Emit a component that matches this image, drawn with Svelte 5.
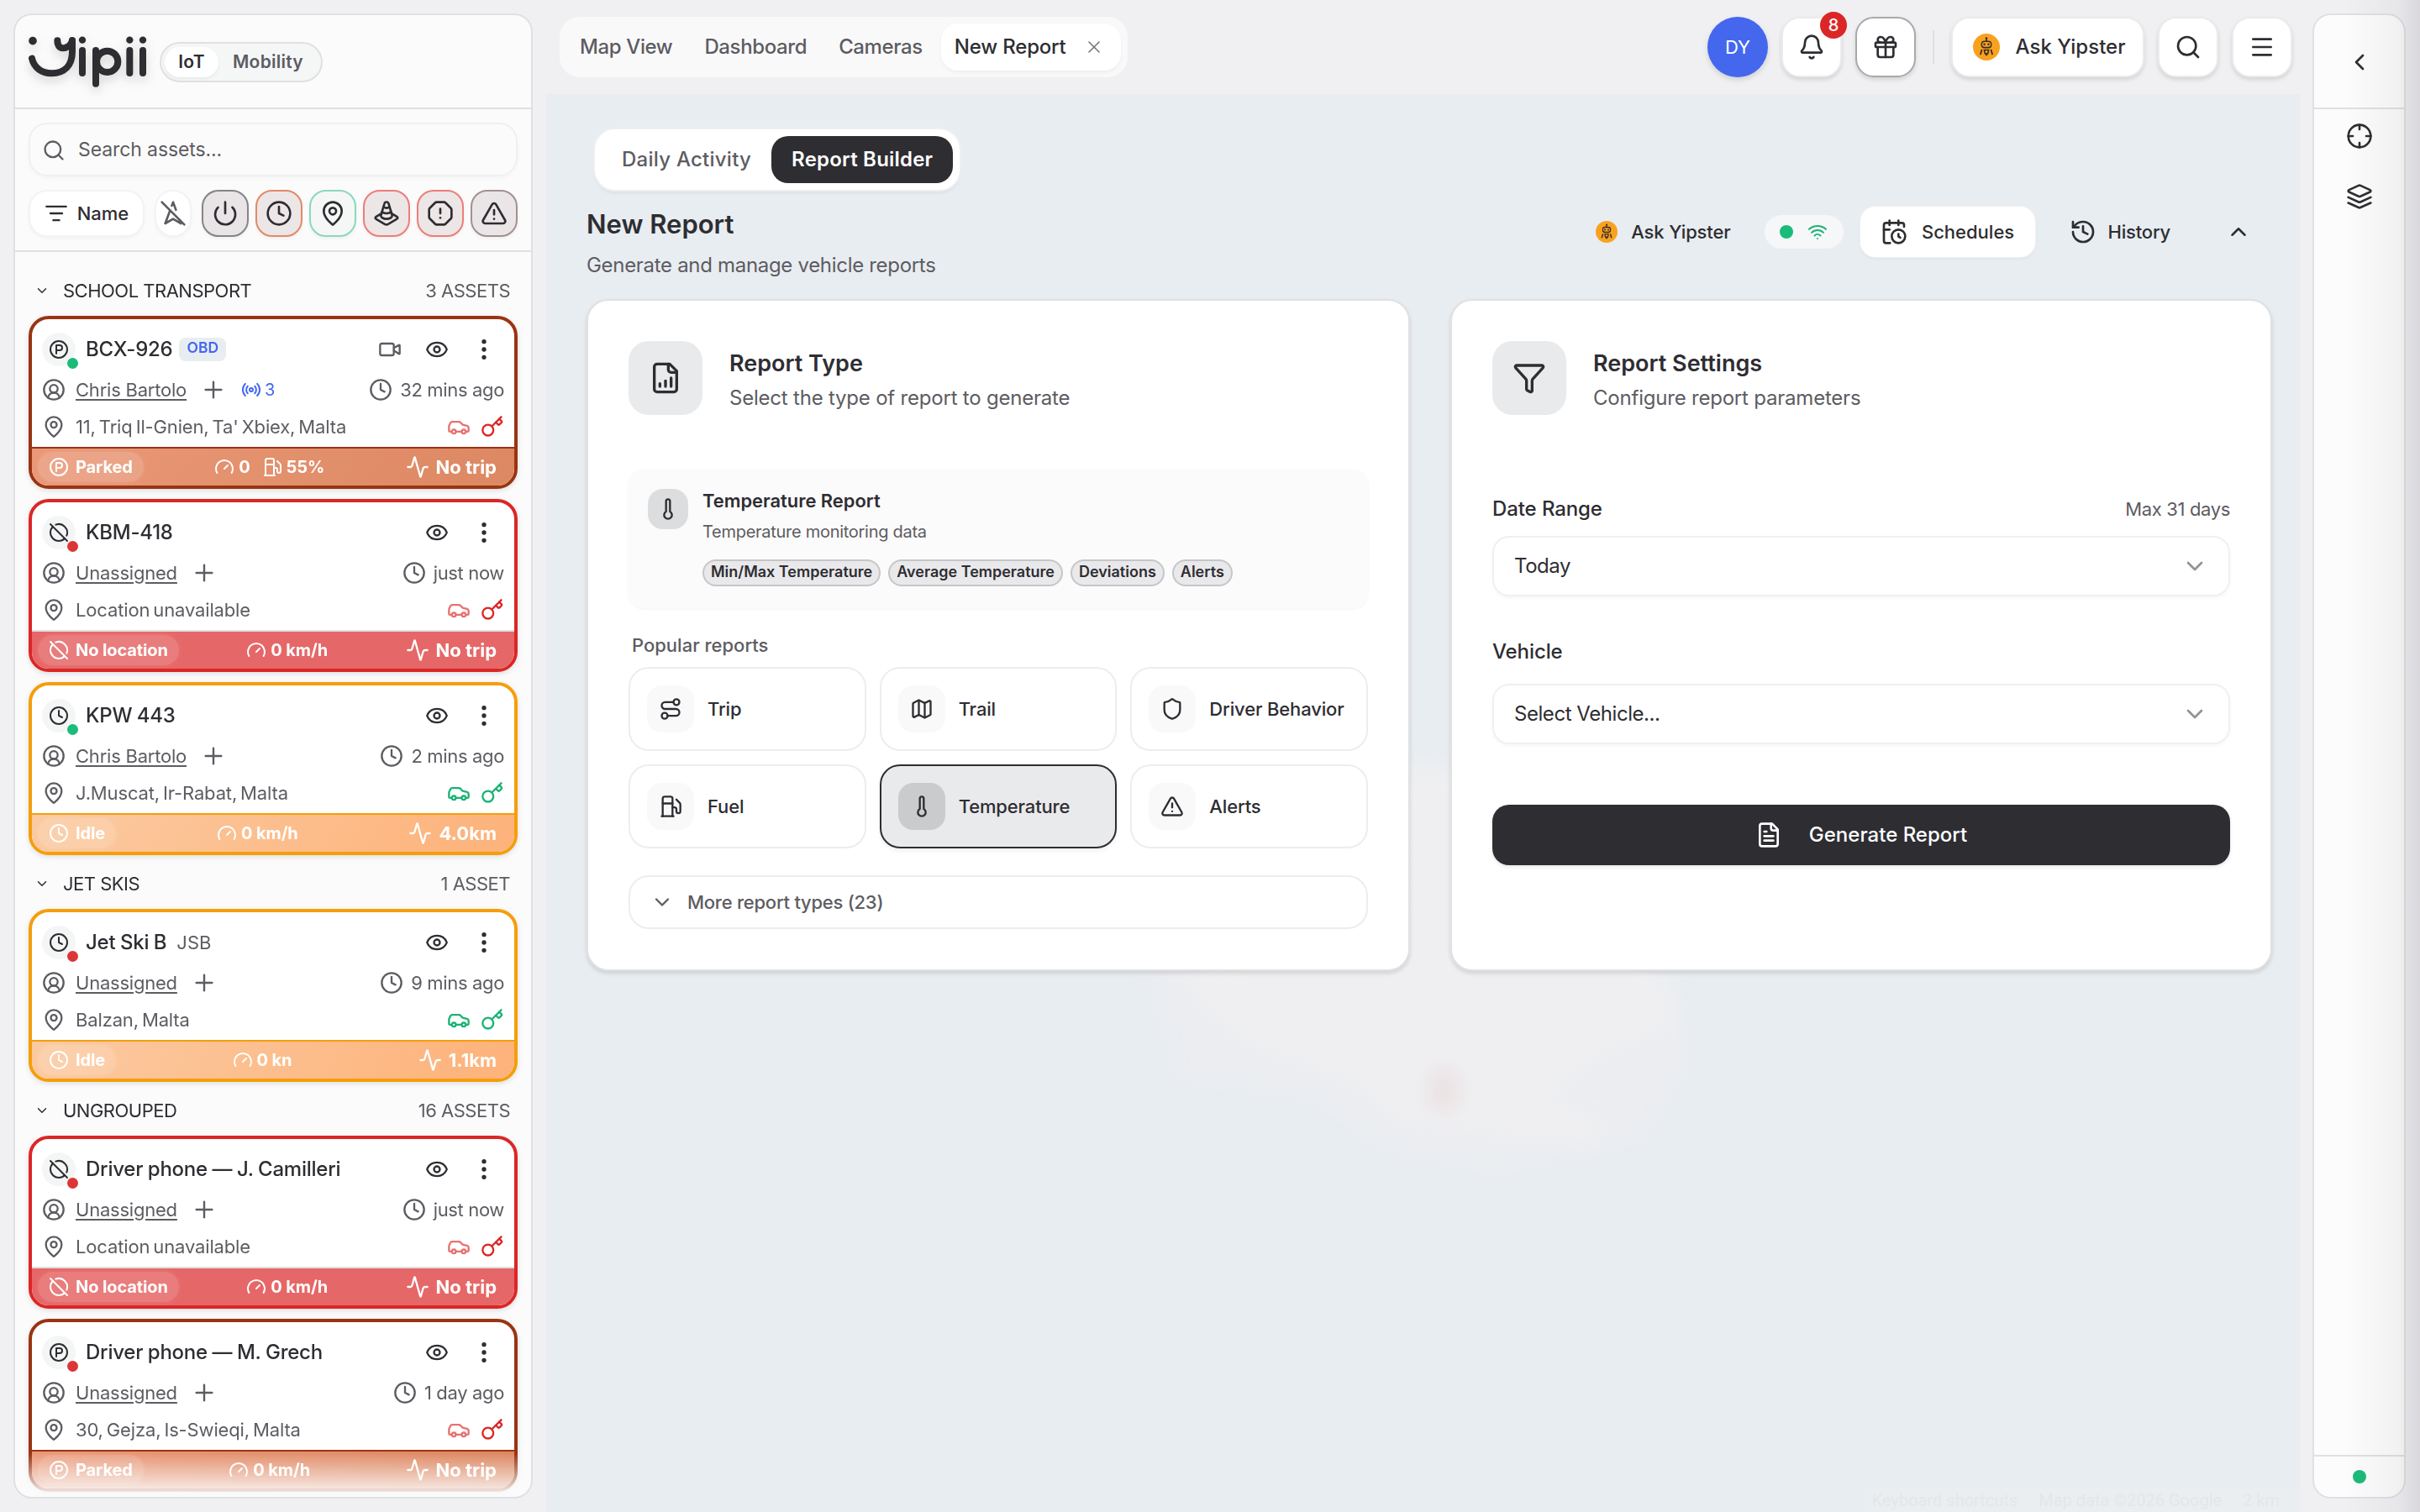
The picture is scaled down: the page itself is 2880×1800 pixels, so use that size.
<script lang="ts">
  const ring = 'M22 12a10 10 0 1 1-20 0 10 10 0 0 1 20 0';

  const icons: Record<string, string[]> = {
    search: ['M19 11a8 8 0 1 1-16 0 8 8 0 0 1 16 0', 'm21 21-4.3-4.3'],
    sort: ['M2 5h20', 'M6 12h12', 'M9 19h6'],
    navOff: ['M9.31 9.31 5 21l7-4 7 4-1.17-3.17', 'M14.53 8.88 12 2l-1.17 3.17', 'm2 2 20 20'],
    power: ['M12 2v10', 'M18.4 6.6a9 9 0 1 1-12.77.04'],
    clock: [ring, 'M12 6v6l4 2'],
    pin: ['M20 10c0 4.993-5.539 10.193-7.399 11.799a1 1 0 0 1-1.202 0C9.539 20.193 4 14.993 4 10a8 8 0 0 1 16 0', 'M15 10a3 3 0 1 1-6 0 3 3 0 0 1 6 0'],
    cone: ['M9.3 6.2a4.55 4.55 0 0 0 5.4 0', 'M7.9 10.7c.9.8 2.4 1.3 4.1 1.3s3.2-.5 4.1-1.3', 'M13.9 3.5a1.93 1.93 0 0 0-3.8-.1l-3 10c-.1.2-.1.4-.1.6 0 1.7 2.2 3 5 3s5-1.3 5-3c0-.2 0-.4-.1-.5Z', 'm7.5 12.2-4.7 2.7c-.5.3-.8.7-.8 1.1s.3.8.8 1.1l7.6 4.5c.9.5 2.1.5 3 0l7.6-4.5c.7-.3 1-.7 1-1.1s-.3-.8-.8-1.1l-4.7-2.8'],
    octagon: ['M12 16h.01', 'M12 8v4', 'M15.312 2a2 2 0 0 1 1.414.586l4.688 4.688A2 2 0 0 1 22 8.688v6.624a2 2 0 0 1-.586 1.414l-4.688 4.688a2 2 0 0 1-1.414.586H8.688a2 2 0 0 1-1.414-.586l-4.688-4.688A2 2 0 0 1 2 15.312V8.688a2 2 0 0 1 .586-1.414l4.688-4.688A2 2 0 0 1 8.688 2z'],
    alert: ['m21.73 18-8-14a2 2 0 0 0-3.48 0l-8 14A2 2 0 0 0 4 21h16a2 2 0 0 0 1.73-3', 'M12 9v4', 'M12 17h.01'],
    parking: [ring, 'M9 17V7h4a3 3 0 0 1 0 6H9'],
    circleOff: ['m2 2 20 20', 'M8.35 2.69A10 10 0 0 1 21.3 15.65', 'M19.08 19.08A10 10 0 1 1 4.92 4.92'],
    user: [ring, 'M17.925 20.056a6 6 0 0 0-11.851.001', 'M16 11a4 4 0 1 1-8 0 4 4 0 0 1 8 0'],
    plus: ['M5 12h14', 'M12 5v14'],
    radio: ['M4.9 19.1C1 15.2 1 8.8 4.9 4.9', 'M7.8 16.2c-2.3-2.3-2.3-6.1 0-8.5', 'M14 12a2 2 0 1 1-4 0 2 2 0 0 1 4 0', 'M16.2 7.8c2.3 2.3 2.3 6.1 0 8.5', 'M19.1 4.9C23 8.8 23 15.1 19.1 19'],
    video: ['m16 13 5.223 3.482a.5.5 0 0 0 .777-.416V7.87a.5.5 0 0 0-.752-.432L16 10.5', 'M4 6h10a2 2 0 0 1 2 2v8a2 2 0 0 1-2 2H4a2 2 0 0 1-2-2V8a2 2 0 0 1 2-2z'],
    eye: ['M2.062 12.348a1 1 0 0 1 0-.696 10.75 10.75 0 0 1 19.876 0 1 1 0 0 1 0 .696 10.75 10.75 0 0 1-19.876 0', 'M15 12a3 3 0 1 1-6 0 3 3 0 0 1 6 0'],
    dots: ['M13 12a1 1 0 1 1-2 0 1 1 0 0 1 2 0', 'M13 5a1 1 0 1 1-2 0 1 1 0 0 1 2 0', 'M13 19a1 1 0 1 1-2 0 1 1 0 0 1 2 0'],
    car: ['M19 17h2c.6 0 1-.4 1-1v-3c0-.9-.7-1.7-1.5-1.9C18.7 10.6 16 10 16 10s-1.3-1.4-2.2-2.3c-.5-.4-1.1-.7-1.8-.7H5c-.6 0-1.1.4-1.4.9l-1.4 2.9A3.7 3.7 0 0 0 2 12v4c0 .6.4 1 1 1h2', 'M9 17a2 2 0 1 1-4 0 2 2 0 0 1 4 0', 'M9 17h6', 'M19 17a2 2 0 1 1-4 0 2 2 0 0 1 4 0'],
    key: ['m15.5 7.5 2.3 2.3a1 1 0 0 0 1.4 0l2.1-2.1a1 1 0 0 0 0-1.4L19 4', 'm21 2-9.6 9.6', 'M13 15.5a5.5 5.5 0 1 1-11 0 5.5 5.5 0 0 1 11 0'],
    gauge: ['m12 14 4-4', 'M3.34 19a10 10 0 1 1 17.32 0'],
    fuel: ['M3 22h12', 'M4 9h10', 'M14 22V4a2 2 0 0 0-2-2H6a2 2 0 0 0-2 2v18', 'M14 13h2a2 2 0 0 1 2 2v2a2 2 0 0 0 2 2a2 2 0 0 0 2-2V9.83a2 2 0 0 0-.59-1.42L18 5'],
    activity: ['M22 12h-2.48a2 2 0 0 0-1.93 1.46l-2.35 8.36a.25.25 0 0 1-.48 0L9.24 2.18a.25.25 0 0 0-.48 0l-2.35 8.36A2 2 0 0 1 4.49 12H2'],
    bell: ['M10.268 21a2 2 0 0 0 3.464 0', 'M3.262 15.326A1 1 0 0 0 4 17h16a1 1 0 0 0 .74-1.673C19.41 13.956 18 12.499 18 8A6 6 0 0 0 6 8c0 4.499-1.411 5.956-2.738 7.326'],
    gift: ['M4 8h16a1 1 0 0 1 1 1v2a1 1 0 0 1-1 1H4a1 1 0 0 1-1-1V9a1 1 0 0 1 1-1z', 'M12 8v13', 'M19 12v7a2 2 0 0 1-2 2H7a2 2 0 0 1-2-2v-7', 'M7.5 8a2.5 2.5 0 0 1 0-5A4.8 8 0 0 1 12 8a4.8 8 0 0 1 4.5-5 2.5 2.5 0 0 1 0 5'],
    menu: ['M4 5h16', 'M4 12h16', 'M4 19h16'],
    crosshair: [ring, 'M22 12h-4', 'M6 12H2', 'M12 6V2', 'M12 22v-4'],
    layers: ['M12.83 2.18a2 2 0 0 0-1.66 0L2.6 6.08a1 1 0 0 0 0 1.83l8.58 3.91a2 2 0 0 0 1.66 0l8.58-3.9a1 1 0 0 0 0-1.83Z', 'm22 17.65-9.17 4.16a2 2 0 0 1-1.66 0L2 17.65', 'm22 12.65-9.17 4.16a2 2 0 0 1-1.66 0L2 12.65'],
    wifi: ['M12 20h.01', 'M2 8.82a15 15 0 0 1 20 0', 'M5 12.859a10 10 0 0 1 14 0', 'M8.5 16.429a5 5 0 0 1 7 0'],
    schedule: ['M16 14v2.2l1.6 1', 'M16 2v4', 'M21 7.5V6a2 2 0 0 0-2-2H5a2 2 0 0 0-2 2v14a2 2 0 0 0 2 2h3.5', 'M3 10h5', 'M8 2v4', 'M22 16a6 6 0 1 1-12 0 6 6 0 0 1 12 0'],
    history: ['M3 12a9 9 0 1 0 9-9 9.75 9.75 0 0 0-6.74 2.74L3 8', 'M3 3v5h5', 'M12 7v5l4 2'],
    chart: ['M15 2H6a2 2 0 0 0-2 2v16a2 2 0 0 0 2 2h12a2 2 0 0 0 2-2V7Z', 'M14 2v4a2 2 0 0 0 2 2h4', 'M8 18v-2', 'M12 18v-4', 'M16 18v-6'],
    file: ['M15 2H6a2 2 0 0 0-2 2v16a2 2 0 0 0 2 2h12a2 2 0 0 0 2-2V7Z', 'M14 2v4a2 2 0 0 0 2 2h4', 'M10 9H8', 'M16 13H8', 'M16 17H8'],
    thermo: ['M14 4v10.54a4 4 0 1 1-4 0V4a2 2 0 0 1 4 0Z'],
    route: ['M9 19a3 3 0 1 1-6 0 3 3 0 0 1 6 0', 'M9 19h8.5a3.5 3.5 0 0 0 0-7h-11a3.5 3.5 0 0 1 0-7H15', 'M21 5a3 3 0 1 1-6 0 3 3 0 0 1 6 0'],
    map: ['M14.106 5.553a2 2 0 0 0 1.788 0l3.659-1.83A1 1 0 0 1 21 4.619v12.764a1 1 0 0 1-.553.894l-4.553 2.277a2 2 0 0 1-1.788 0l-4.212-2.106a2 2 0 0 0-1.788 0l-3.659 1.83A1 1 0 0 1 3 19.381V6.618a1 1 0 0 1 .553-.894l4.553-2.277a2 2 0 0 1 1.788 0z', 'M15 5.764v15', 'M9 3.236v15'],
    shield: ['M20 13c0 5-3.5 7.5-7.66 8.95a1 1 0 0 1-.67-.01C7.5 20.5 4 18 4 13V6a1 1 0 0 1 1-1c2 0 4.5-1.2 6.24-2.72a1.17 1.17 0 0 1 1.52 0C14.51 3.81 17 5 19 5a1 1 0 0 1 1 1z'],
    funnel: ['M10 20a1 1 0 0 0 .553.895l2 1A1 1 0 0 0 14 21v-7a2 2 0 0 1 .517-1.341L21.74 4.67A1 1 0 0 0 21 3H3a1 1 0 0 0-.742 1.67l7.225 7.989A2 2 0 0 1 10 14z'],
    close: ['M18 6 6 18', 'm6 6 12 12'],
    down: ['m6 9 6 6 6-6'],
    up: ['m18 15-6-6-6 6'],
    left: ['m15 18-6-6 6-6'],
  };

  const filters = [
    { icon: 'power', tone: 'grey' },
    { icon: 'clock', tone: 'orange' },
    { icon: 'pin', tone: 'green' },
    { icon: 'cone', tone: 'red' },
    { icon: 'octagon', tone: 'red' },
    { icon: 'alert', tone: 'mixed' },
  ];

  const states = {
    parked: { icon: 'parking', label: 'Parked' },
    lost: { icon: 'circleOff', label: 'No location' },
    idle: { icon: 'clock', label: 'Idle' },
  };

  type Asset = {
    name: string; plate?: string; obd?: boolean; sensors?: number; camera?: boolean;
    state: keyof typeof states; online: boolean; ignition: boolean;
    driver: string; seen: string; place: string; speed: string; fuel?: string; trip: string;
  };

  const groups: { title: string; count: string; assets: Asset[] }[] = [
    {
      title: 'SCHOOL TRANSPORT', count: '3 ASSETS',
      assets: [
        { name: 'BCX-926', obd: true, sensors: 3, camera: true, state: 'parked', online: true, ignition: false, driver: 'Chris Bartolo', seen: '32 mins ago', place: "11, Triq Il-Gnien, Ta' Xbiex, Malta", speed: '0', fuel: '55%', trip: 'No trip' },
        { name: 'KBM-418', state: 'lost', online: false, ignition: false, driver: 'Unassigned', seen: 'just now', place: 'Location unavailable', speed: '0 km/h', trip: 'No trip' },
        { name: 'KPW 443', state: 'idle', online: true, ignition: true, driver: 'Chris Bartolo', seen: '2 mins ago', place: 'J.Muscat, Ir-Rabat, Malta', speed: '0 km/h', trip: '4.0km' },
      ],
    },
    {
      title: 'JET SKIS', count: '1 ASSET',
      assets: [
        { name: 'Jet Ski B', plate: 'JSB', state: 'idle', online: false, ignition: true, driver: 'Unassigned', seen: '9 mins ago', place: 'Balzan, Malta', speed: '0 kn', trip: '1.1km' },
      ],
    },
    {
      title: 'UNGROUPED', count: '16 ASSETS',
      assets: [
        { name: 'Driver phone — J. Camilleri', state: 'lost', online: false, ignition: false, driver: 'Unassigned', seen: 'just now', place: 'Location unavailable', speed: '0 km/h', trip: 'No trip' },
        { name: 'Driver phone — M. Grech', state: 'parked', online: false, ignition: false, driver: 'Unassigned', seen: '1 day ago', place: '30, Gejza, Is-Swieqi, Malta', speed: '0 km/h', trip: 'No trip' },
      ],
    },
  ];

  const chips = ['Min/Max Temperature', 'Average Temperature', 'Deviations', 'Alerts'];

  const popular = [
    { icon: 'route', label: 'Trip' },
    { icon: 'map', label: 'Trail' },
    { icon: 'shield', label: 'Driver Behavior' },
    { icon: 'fuel', label: 'Fuel' },
    { icon: 'thermo', label: 'Temperature' },
    { icon: 'alert', label: 'Alerts' },
  ];
  let selected = $state('Temperature');
</script>

{#snippet icon(name: string, size = 32, weight = 2)}
  <svg class="icon" width={size} height={size} viewBox="0 0 24 24" stroke-width={weight}>
    {#each icons[name] as d}<path {d} />{/each}
  </svg>
{/snippet}

{#snippet robot(size: number)}
  <svg width={size} height={size} viewBox="0 0 32 32">
    <circle cx="16" cy="16" r="16" fill="#f9a11f" />
    <path d="M16 5v4" stroke="#3a3024" stroke-width="1.6" />
    <circle cx="16" cy="5.6" r="1.3" fill="#3a3024" />
    <rect x="9.6" y="8.4" width="12.8" height="9" rx="4" fill="#3a3024" />
    <rect x="11" y="10" width="10" height="5.8" rx="2.8" fill="#f9a11f" />
    <circle cx="13.6" cy="12.8" r="1.2" fill="#3a3024" />
    <circle cx="18.4" cy="12.8" r="1.2" fill="#3a3024" />
    <path d="M12.4 18.8h7.2l-1 5-2.6 3-2.6-3z" fill="#3a3024" />
    <circle cx="16" cy="21.4" r="1.5" fill="#f9a11f" />
    <path d="M10.4 19.6 9 24.4M21.6 19.6l1.4 4.8" stroke="#3a3024" stroke-width="1.8" stroke-linecap="round" />
  </svg>
{/snippet}

<div class="app">
  <aside class="sidebar">
    <header class="brand">
      <svg class="logo" width="140" height="60" viewBox="0 0 420 180" aria-label="Yipii">
        <circle cx="15" cy="14" r="14.5" class="fill" />
        <circle cx="192" cy="11" r="12.5" class="fill" />
        <circle cx="361" cy="11" r="12.5" class="fill" />
        <circle cx="408" cy="11" r="12.5" class="fill" />
        <path d="M12 77c8 34 36 53 70 53 46 0 74-28 74-78V12" />
        <path d="M103 13c0 22 12 30 27 26 14-3 22-10 26-26" />
        <path d="M192 48v81M361 48v81M408 48v81M240 48v119" />
        <circle cx="281" cy="88" r="38" />
      </svg>
      <div class="switch"><span class="on">IoT</span><span>Mobility</span></div>
    </header>

    <div class="tools">
      <div class="search">{@render icon('search', 28)}<span>Search assets...</span></div>
      <div class="filters">
        <button class="sort">{@render icon('sort', 28)}Name</button>
        <button class="off">{@render icon('navOff', 32)}</button>
        <div class="toggles">
          {#each filters as f}
            <button class="toggle {f.tone}">{@render icon(f.icon, 32)}</button>
          {/each}
        </div>
      </div>
    </div>

    <div class="list">
      {#each groups as group (group.title)}
        <div class="group">
          {@render icon('down', 18)}<span class="gtitle">{group.title}</span><span class="gcount">{group.count}</span>
        </div>
        <div class="cards">
          {#each group.assets as a (a.name)}
            <article class="asset {a.state}">
              <div class="row head">
                <span class="avatar">{@render icon(states[a.state].icon, 24)}<i class:online={a.online}></i></span>
                <span class="name">{a.name}</span>
                {#if a.obd}<span class="obd">OBD</span>{/if}
                {#if a.plate}<span class="plate">{a.plate}</span>{/if}
                <span class="actions">
                  {#if a.camera}<span class="cam">{@render icon('video', 28)}</span>{/if}
                  {@render icon('eye', 28)}
                  {@render icon('dots', 32)}
                </span>
              </div>
              <div class="row driver">
                {@render icon('user', 28)}
                <span class="link">{a.driver}</span>
                {@render icon('plus', 32, 1.8)}
                {#if a.sensors}<span class="sensors">{@render icon('radio', 24)}{a.sensors}</span>{/if}
                <span class="seen">{@render icon('clock', 28)}{a.seen}</span>
              </div>
              <div class="row place">
                {@render icon('pin', 28)}
                <span>{a.place}</span>
                <span class="ignition" class:live={a.ignition}>{@render icon('car', 28)}{@render icon('key', 28)}</span>
              </div>
              <footer>
                <span class="pill">{@render icon(states[a.state].icon, 24)}{states[a.state].label}</span>
                <span class="stats">
                  <span>{@render icon('gauge', 24)}{a.speed}</span>
                  {#if a.fuel}<span>{@render icon('fuel', 24)}{a.fuel}</span>{/if}
                </span>
                <span class="trip">{@render icon('activity', 28)}{a.trip}</span>
              </footer>
            </article>
          {/each}
        </div>
      {/each}
    </div>
  </aside>

  <main>
    <nav class="topbar">
      <div class="tabs">
        <span>Map View</span>
        <span>Dashboard</span>
        <span>Cameras</span>
        <span class="current">New Report{@render icon('close', 24, 1.6)}</span>
      </div>
      <div class="tray">
        <span class="me">DY</span>
        <button class="sq">{@render icon('bell')}<b>8</b></button>
        <button class="sq gift">{@render icon('gift')}</button>
        <i class="sep"></i>
        <button class="ask">{@render robot(32)}Ask Yipster</button>
        <button class="sq">{@render icon('search')}</button>
        <button class="sq">{@render icon('menu')}</button>
      </div>
    </nav>

    <section class="content">
      <svg class="land" width="2087" height="1688" viewBox="650 112 2087 1688">
        <path class="halo" d="M1660 905 1740 900 1990 1130 2010 1270 1960 1360 1780 1400 1640 1370 1560 1310 1400 1290 1360 1150z" />
        <path d="M1670 912 1740 920 1970 1163 1992 1180 1992 1228 1925 1249 1867 1287 1850 1310 1884 1321 1920 1335 1893 1366 1804 1356 1670 1342 1612 1294 1469 1239 1393 1160 1660 1100z" />
        <ellipse cx="1718" cy="1298" rx="20" ry="28" />
      </svg>

      <div class="modes"><span>Daily Activity</span><span class="on">Report Builder</span></div>

      <div class="heading">
        <div>
          <h1>New Report</h1>
          <p>Generate and manage vehicle reports</p>
        </div>
        <div class="links">
          <span class="yip">{@render robot(26)}Ask Yipster</span>
          <span class="status"><i></i>{@render icon('wifi', 24)}</span>
          <button class="schedules">{@render icon('schedule')}Schedules</button>
          <span class="hist">{@render icon('history')}History</span>
          {@render icon('up', 30)}
        </div>
      </div>

      <div class="panels">
        <div class="panel">
          <div class="phead">
            <span class="tile">{@render icon('chart', 40)}</span>
            <div><h2>Report Type</h2><p>Select the type of report to generate</p></div>
          </div>
          <div class="summary">
            <span class="mini">{@render icon('thermo', 28)}</span>
            <div>
              <h3>Temperature Report</h3>
              <p>Temperature monitoring data</p>
              <div class="chips">{#each chips as c}<span>{c}</span>{/each}</div>
            </div>
          </div>
          <p class="label">Popular reports</p>
          <div class="grid">
            {#each popular as p (p.label)}
              <button class="cell" class:picked={selected === p.label} onclick={() => (selected = p.label)}>
                <span>{@render icon(p.icon, 28)}</span>{p.label}
              </button>
            {/each}
          </div>
          <button class="more">{@render icon('down', 28)}More report types (23)</button>
        </div>

        <div class="panel">
          <div class="phead">
            <span class="tile">{@render icon('funnel', 40)}</span>
            <div><h2>Report Settings</h2><p>Configure report parameters</p></div>
          </div>
          <div class="field first">
            <div class="flabel"><span>Date Range</span><small>Max 31 days</small></div>
            <div class="select">Today{@render icon('down', 32)}</div>
          </div>
          <div class="field">
            <div class="flabel"><span>Vehicle</span></div>
            <div class="select">Select Vehicle...{@render icon('down', 32)}</div>
          </div>
          <button class="generate">{@render icon('file')}Generate Report</button>
        </div>
      </div>

      <div class="credits"><span>Keyboard shortcuts</span><span>Map data ©2026 Google</span><span>2 km</span></div>
    </section>
  </main>

  <aside class="rail">
    <div class="rtop">{@render icon('left')}</div>
    <div class="rtools">{@render icon('crosshair')}{@render icon('layers')}</div>
    <div class="rfoot"><i></i></div>
  </aside>
  <div class="edge"></div>
</div>

<style>
  :global(body) { background: #f0f0f3; }
  .app {
    --ink: #2e2d32; --muted: #5d5c62; --line: #e0e0e2; --soft: #f0f0f2;
    position: relative; display: flex; width: 2880px; height: 1800px; overflow: hidden;
    background: #f0f0f3; color: var(--ink);
    font-family: Inter, "Liberation Sans", sans-serif; font-size: 22px; line-height: 1.2;
  }
  .app :global(*) { box-sizing: border-box; }
  button { border: 0; margin: 0; padding: 0; background: none; font: inherit; color: inherit; letter-spacing: inherit; }
  h1, h2, h3, p { margin: 0; }
  svg { flex: none; display: block; }
  .icon { fill: none; stroke: currentColor; stroke-linecap: round; stroke-linejoin: round; }

  /* sidebar */
  .sidebar {
    flex: none; display: flex; flex-direction: column; width: 618px; height: 1768px; margin: 16px 0 0 16px;
    border: 2px solid var(--line); border-radius: 22px; background: #fbfbfb; overflow: hidden;
  }
  .brand { flex: none; display: flex; align-items: center; gap: 16px; height: 112px; padding: 2px 0 0 16px; border-bottom: 2px solid var(--line); }
  .logo { fill: none; stroke: var(--ink); stroke-width: 24; stroke-linecap: round; overflow: visible; filter: drop-shadow(0 6px 6px rgba(46, 45, 50, .18)); }
  .logo .fill { fill: var(--ink); stroke: none; }
  .switch { display: flex; align-items: center; height: 48px; padding: 0 21px 0 4px; gap: 17px; border: 2px solid var(--line); border-radius: 24px; background: #f5f7f7; font-weight: 600; font-size: 21px; letter-spacing: .25px; color: var(--muted); }
  .switch .on { display: grid; place-items: center; width: 64px; height: 36px; border-radius: 18px; background: #fff; color: var(--ink); box-shadow: 0 2px 4px rgba(0, 0, 0, .06); }
  .tools { flex: none; padding: 16px; border-bottom: 2px solid var(--line); }
  .search { display: flex; align-items: center; gap: 15px; height: 64px; padding: 2px 0 0 14px; border: 2px solid var(--soft); border-radius: 22px; color: var(--muted); font-size: 23px; letter-spacing: -.1px; box-shadow: 0 2px 4px rgba(0, 0, 0, .03); }
  .filters { display: flex; gap: 12px; margin-top: 16px; }
  .sort, .off { display: flex; align-items: center; justify-content: center; height: 56px; border: 2px solid #f3f3f5; border-radius: 22px; background: #fff; box-shadow: 0 2px 4px rgba(0, 0, 0, .04); }
  .sort { width: 138px; gap: 11px; font-weight: 500; }
  .off { width: 44px; color: var(--muted); }
  .toggles { display: flex; gap: 8px; }
  .toggle { display: grid; place-items: center; width: 56px; height: 56px; border: 2px solid; border-radius: 20px; background: #ece6e7; box-shadow: 0 2px 4px rgba(0, 0, 0, .05); }
  .toggle .icon { color: var(--ink); stroke: var(--ink); }
  .grey { border-color: #85848a; background: #e9e5e7; }
  .orange { border-color: #e38a65; }
  .green { border-color: #8ad9bb; background: #f5f7f7; }
  .red { border-color: #ee7d78; }
  .mixed { border-color: #a5908f; background: #eae6e8; }

  .list { flex: 1; min-height: 0; padding: 12px 16px 0; overflow: hidden; mask-image: linear-gradient(to bottom, #000 calc(100% - 52px), rgba(0, 0, 0, .12) calc(100% - 6px)); }
  .group { display: flex; align-items: center; height: 64px; padding: 4px 9px 0 7px; letter-spacing: -.5px; }
  .gtitle { margin-left: 16px; }
  .gcount { margin-left: auto; color: var(--muted); }
  .cards { display: flex; flex-direction: column; gap: 12px; }
  .asset { --edge: #9a3412; height: 206px; border: 4px solid var(--edge); border-radius: 24px; background: #fff; overflow: hidden; box-shadow: 0 2px 6px rgba(0, 0, 0, .12); padding-top: 12px; }
  .asset.lost { --edge: #dc2626; }
  .asset.idle { --edge: #f59e0b; }
  .row { display: flex; align-items: center; height: 48px; padding: 0 12px; color: var(--muted); }
  .head { color: var(--ink); }
  .avatar { position: relative; display: grid; place-items: center; width: 40px; height: 40px; border-radius: 50%; background: #f4f6f6; }
  .avatar i { position: absolute; right: -3px; bottom: -3px; width: 13px; height: 13px; border-radius: 50%; background: #dc3535; }
  .avatar i.online { background: #1bbb79; }
  .name { margin-left: 12px; font-size: 24px; font-weight: 500; letter-spacing: -.25px; word-spacing: -.5px; }
  .obd { margin-left: 8px; height: 28px; padding: 1px 9px 0; border-radius: 8px; background: #e8edf2; color: #4467ee; font-size: 17.5px; font-weight: 600; line-height: 22px; }
  .plate { margin-left: 12px; color: var(--muted); }
  .actions { display: flex; align-items: center; gap: 26px; margin-left: auto; margin-right: 8px; }
  .cam { color: var(--muted); margin-right: 2px; }
  .link { margin: 0 16px 0 12px; letter-spacing: -.22px; text-decoration: underline; text-decoration-thickness: 2px; text-underline-offset: 3px; }
  .sensors { display: flex; align-items: center; gap: 4px; margin-left: 17px; color: #4467ee; font-size: 20px; }
  .seen { display: flex; align-items: center; gap: 9px; margin-left: auto; letter-spacing: -.35px; }
  .place { height: 40px; margin-bottom: 4px; }
  .place > span:first-of-type { margin-left: 12px; letter-spacing: -.15px; word-spacing: -2px; }
  .ignition { display: flex; gap: 12px; margin-left: auto; color: #dc2626; }
  .ignition .icon:first-child { opacity: .65; }
  .ignition.live { color: #1bb374; }
  .ignition.live .icon:first-child { opacity: 1; }
  .asset footer { display: flex; align-items: center; justify-content: space-between; height: 46px; padding: 0 21px 0 7px; border-top: 2px solid var(--edge); background: linear-gradient(120deg, #ea9878, #dc8862); color: #fff; font-size: 20px; font-weight: 700; letter-spacing: -.1px; }
  .lost footer { background: #e66767; border-top-color: #e0dfe2; }
  .idle footer { background: linear-gradient(120deg, #fbcaa1, #fdb27a); }
  .pill { display: flex; align-items: center; gap: 8px; height: 36px; padding: 0 13px; border-radius: 18px; background: rgba(255, 255, 255, .14); box-shadow: 0 0 6px rgba(255, 255, 255, .12); }
  .stats { display: flex; gap: 14px; margin-right: 12px; }
  .stats span { display: flex; align-items: center; gap: 5px; }
  .trip { display: flex; align-items: center; gap: 8px; font-size: 22px; letter-spacing: 0; }

  /* top bar */
  main { flex: none; width: 2087px; margin: 0 15px 0 16px; }
  .topbar { display: flex; justify-content: space-between; height: 112px; padding: 20px 9px 0 16px; }
  .tabs { display: flex; align-items: center; gap: 6px; height: 72px; padding: 8px; border-radius: 24px; background: #f9f9fa; color: var(--muted); font-size: 24px; font-weight: 500; letter-spacing: -.38px; }
  .tabs span { padding: 0 16px; }
  .tabs .current { display: flex; align-items: center; gap: 21px; height: 56px; padding-right: 20px; border-radius: 20px; background: #fff; color: var(--ink); letter-spacing: -.2px; box-shadow: 0 2px 4px rgba(0, 0, 0, .05); }
  .current .icon { color: #77767b; }
  .tray { display: flex; gap: 16px; height: 72px; }
  .me { display: grid; place-items: center; width: 72px; height: 72px; border-radius: 50%; background: #4467ee; color: #fff; box-shadow: 0 3px 6px rgba(0, 0, 0, .14); }
  .sq, .ask { position: relative; display: flex; align-items: center; justify-content: center; width: 72px; height: 72px; border: 2px solid #ebebed; border-radius: 22px; background: #fff; box-shadow: 0 3px 5px rgba(0, 0, 0, .12); }
  .gift { border-color: #a9a9ac; }
  .sq b { position: absolute; top: -8px; right: -8px; display: grid; place-items: center; width: 32px; height: 32px; border-radius: 50%; background: #dc2626; color: #fff; font-size: 20px; font-weight: 500; }
  .sep { width: 2px; height: 40px; margin: 16px 4px 0 4px; background: #e0e0e3; }
  .ask { width: 230px; gap: 19px; padding-left: 3px; font-size: 24px; font-weight: 500; }

  /* report page */
  .content { position: relative; height: 1688px; padding: 42px 33px 0 48px; background: #e8edf1; }
  .land { position: absolute; inset: 0; fill: #efeff1; filter: blur(12px); }
  .land .halo { fill: #ecedf0; opacity: .6; }
  .land ellipse { fill: #ebe2e3; }
  .modes, .heading, .panels { position: relative; }
  .modes { display: flex; align-items: center; width: fit-content; height: 72px; margin-left: 10px; padding: 8px; border-radius: 24px; background: #fff; color: var(--muted); font-size: 24px; font-weight: 500; letter-spacing: .25px; box-shadow: 0 0 0 2px #efeff1, 0 4px 4px rgba(0, 0, 0, .06); }
  .modes span { padding: 0 24px; line-height: 56px; }
  .modes .on { border-radius: 20px; background: var(--ink); color: #fff; font-weight: 600; letter-spacing: .2px; }
  .heading { display: flex; justify-content: space-between; height: 130px; padding-top: 20px; }
  h1 { font-size: 31px; font-weight: 600; line-height: 42px; }
  .heading p { margin-top: 13px; color: var(--muted); font-size: 24px; line-height: 30px; letter-spacing: -.31px; }
  .links { display: flex; align-items: center; height: 60px; font-weight: 500; }
  .yip { display: flex; align-items: center; gap: 16px; margin-right: 40px; letter-spacing: -.15px; }
  .status { display: flex; align-items: center; justify-content: center; gap: 17px; width: 94px; height: 40px; margin-right: 20px; border-radius: 20px; background: #f5f7f8; color: #1bb374; }
  .status i, .rfoot i { width: 16px; height: 16px; border-radius: 50%; background: #1bbb79; }
  .schedules { display: flex; align-items: center; justify-content: center; gap: 17px; width: 208px; height: 60px; border-radius: 18px; background: #fff; box-shadow: 0 0 0 1px #f0f0f2, 0 2px 4px rgba(0, 0, 0, .05); }
  .hist { display: flex; align-items: center; gap: 14px; margin: 0 66px 0 41px; letter-spacing: -.2px; }
  .links > .icon { margin-right: 25px; }

  .panels { display: grid; grid-template-columns: 980fr 978fr; gap: 48px; }
  .panel { height: 800px; padding: 48px; border: 2px solid #e0e1e3; border-radius: 26px; background: #fff; box-shadow: 0 3px 5px rgba(0, 0, 0, .12); }
  .phead { display: flex; align-items: center; gap: 32px; height: 88px; }
  .phead > div { padding-top: 6px; }
  .tile { display: grid; place-items: center; width: 88px; height: 88px; border-radius: 24px; background: #e9eaec; }
  h2 { font-size: 27px; font-weight: 600; line-height: 34px; }
  .phead p { margin-top: 8px; font-size: 24px; line-height: 32px; letter-spacing: -.21px; color: var(--muted); }
  .summary { display: flex; gap: 17px; height: 166px; margin: 64px -1px 0; padding: 24px; border-radius: 20px; background: #fbfbfb; box-shadow: 0 2px 3px rgba(0, 0, 0, .03); }
  .mini { display: grid; place-items: center; width: 48px; height: 48px; border-radius: 18px; background: #dcdddf; }
  h3 { font-size: 21.9px; font-weight: 600; line-height: 28px; }
  .summary p { margin-top: 8px; font-size: 20px; line-height: 30px; letter-spacing: -.28px; color: var(--muted); }
  .chips { display: flex; gap: 9px; margin-top: 18px; }
  .chips span { height: 32px; padding: 0 8px; border: 2px solid #c6c6c8; border-radius: 16px; background: #e9e9eb; font-size: 18px; font-weight: 600; line-height: 25px; }
  .label { margin-top: 28px; padding-left: 4px; line-height: 32px; color: var(--muted); font-weight: 500; }
  .grid { display: grid; grid-template-columns: repeat(3, 1fr); gap: 16px; margin-top: 10px; }
  .cell { display: flex; align-items: center; gap: 16px; height: 100px; padding-left: 20px; border: 2px solid #ededef; border-radius: 24px; font-weight: 500; letter-spacing: -.15px; }
  .cell span { display: grid; place-items: center; width: 56px; height: 56px; border-radius: 18px; background: #f9f9fa; }
  .picked { border-color: var(--ink); background: #e9eaec; box-shadow: 0 3px 5px rgba(0, 0, 0, .06); }
  .picked span { background: #cacbcc; }
  .more { display: flex; align-items: center; gap: 16px; width: 100%; height: 64px; margin-top: 32px; padding-left: 24px; border: 2px solid #ededef; border-radius: 24px; color: var(--muted); font-weight: 500; letter-spacing: -.25px; }
  .field.first { margin-top: 96px; }
  .first .flabel { padding-bottom: 3px; }
  .field { margin-top: 48px; }
  .flabel { display: flex; align-items: center; justify-content: space-between; height: 36px; font-size: 24px; font-weight: 500; letter-spacing: -.1px; }
  .flabel small { font-size: 22px; font-weight: 400; letter-spacing: -.35px; color: var(--muted); }
  .select { display: flex; align-items: center; justify-content: space-between; height: 72px; margin-top: 12px; padding: 0 24px; border: 2px solid var(--soft); border-radius: 20px; font-size: 24px; letter-spacing: -.45px; box-shadow: 0 2px 4px rgba(0, 0, 0, .04); }
  .select .icon { color: #939296; }
  .field + .field .select { margin-top: 20px; }
  .generate { display: flex; align-items: center; justify-content: center; gap: 32px; width: 100%; height: 72px; margin-top: 72px; border-radius: 20px; background: var(--ink); color: #fff; font-size: 24px; font-weight: 500; box-shadow: 0 2px 4px rgba(0, 0, 0, .1); }
  .credits { position: absolute; right: 0; bottom: 0; display: flex; gap: 25px; padding: 2px 24px 2px 10px; background: #ebeef1; font: 20px/24px Roboto, sans-serif; color: #e4e6e9; }

  /* right rail */
  .rail { flex: none; display: flex; flex-direction: column; width: 111px; height: 1768px; margin-top: 16px; border: 2px solid var(--line); border-radius: 22px; background: #fcfcfc; }
  .rtop { display: grid; place-items: center; height: 112px; padding-top: 2px; border-bottom: 2px solid var(--line); }
  .rtools { flex: 1; display: flex; flex-direction: column; align-items: center; gap: 40px; padding-top: 16px; }
  .rfoot { display: grid; place-items: center; height: 50px; border-top: 2px solid var(--line); }
  .edge { position: absolute; top: 0; right: 0; width: 90px; height: 100%; pointer-events: none; background: linear-gradient(to right, transparent, rgba(60, 50, 60, .05) 70%, rgba(60, 50, 60, .13)); }
</style>
